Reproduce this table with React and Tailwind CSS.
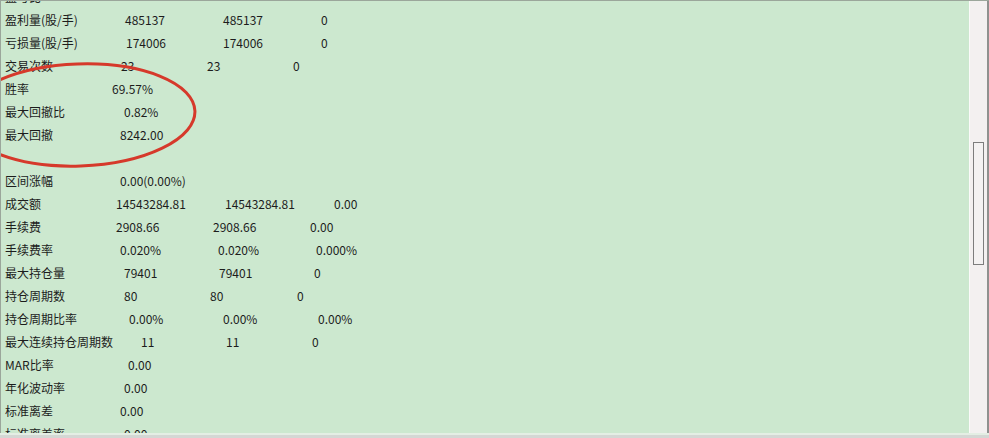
import React from 'react';

// each row: label + values; widths are the column spans measured from the screen
const rows = [
  { label: '盈亏比', cells: [['w-[115px]', '']] },
  { label: '盈利量(股/手)', cells: [['w-[120px]', '485137'], ['w-[98px]', '485137'], ['w-[98px]', '0']] },
  { label: '亏损量(股/手)', cells: [['w-[121px]', '174006'], ['w-[97px]', '174006'], ['w-[98px]', '0']] },
  { label: '交易次数', cells: [['w-[116px]', '23'], ['w-[86px]', '23'], ['w-[86px]', '0']] },
  { label: '胜率', cells: [['w-[107px]', '69.57%']] },
  { label: '最大回撤比', cells: [['w-[119px]', '0.82%']] },
  { label: '最大回撤', cells: [['w-[115px]', '8242.00']] },
  { label: '', cells: [] },
  { label: '区间涨幅', cells: [['w-[115px]', '0.00(0.00%)']] },
  { label: '成交额', cells: [['w-[111px]', '14543284.81'], ['w-[109px]', '14543284.81'], ['w-[109px]', '0.00']] },
  { label: '手续费', cells: [['w-[111px]', '2908.66'], ['w-[97px]', '2908.66'], ['w-[97px]', '0.00']] },
  { label: '手续费率', cells: [['w-[115px]', '0.020%'], ['w-[98px]', '0.020%'], ['w-[98px]', '0.000%']] },
  { label: '最大持仓量', cells: [['w-[119px]', '79401'], ['w-[95px]', '79401'], ['w-[95px]', '0']] },
  { label: '持仓周期数', cells: [['w-[119px]', '80'], ['w-[86px]', '80'], ['w-[87px]', '0']] },
  { label: '持仓周期比率', cells: [['w-[124px]', '0.00%'], ['w-[94px]', '0.00%'], ['w-[95px]', '0.00%']] },
  { label: '最大连续持仓周期数', cells: [['w-[136px]', '11'], ['w-[85px]', '11'], ['w-[86px]', '0']] },
  { label: 'MAR比率', cells: [['w-[123px]', '0.00']] },
  { label: '年化波动率', cells: [['w-[119px]', '0.00']] },
  { label: '标准离差', cells: [['w-[115px]', '0.00']] },
  { label: '标准离差率', cells: [['w-[119px]', '0.00']] },
];

const Row = ({ label, cells }) => (
  <div className="flex h-[23px] leading-[23px] pl-[4px] whitespace-nowrap">
    {cells.length === 0 ? (
      <span>&nbsp;</span>
    ) : (
      cells.map(([w, v], i) => (
        <span key={i} className={`${w} shrink-0`}>
          {i === 0 ? label : cells[i - 1][1]}
        </span>
      ))
    )}
    {cells.length > 0 && <span>{cells[cells.length - 1][1]}</span>}
  </div>
);

export default function App() {
  return (
    <div className="w-[989px] h-[438px] flex flex-col bg-[#d9ddd9] overflow-hidden font-['Noto_Sans_CJK_SC',sans-serif] text-[12px] text-[#1c1c1c]">
      <div className="flex flex-1 min-h-0 border-t border-l border-[#9ba69b]">
        {/* report area */}
        <div className="relative flex-1 bg-[#cce8cf] overflow-hidden">
          <div className="mt-[-16px]">
            {rows.map((r, i) => (
              <Row key={i} label={r.label} cells={r.cells} />
            ))}
          </div>
          {/* hand-drawn red mark */}
          <svg className="absolute left-0 top-0 pointer-events-none" width="260" height="200">
            <ellipse cx="78" cy="114" rx="116" ry="51" fill="none" stroke="#d6392b" strokeWidth="3" transform="rotate(-2 78 114)" />
          </svg>
        </div>
        {/* scrollbar */}
        <div className="w-[18px] bg-[#f3f0f0] border-l border-[#fbfafa] flex justify-center">
          <div className="mt-[141px] w-[11px] h-[123px] border border-[#7d7d7d] bg-[#f4f2f2]" />
        </div>
        <div className="w-[2px] bg-[#8f918f]" />
      </div>
      <div className="h-[2px] bg-[#e4eee4]" />
      <div className="h-[3px] bg-[#d4d7d4]" />
    </div>
  );
}
